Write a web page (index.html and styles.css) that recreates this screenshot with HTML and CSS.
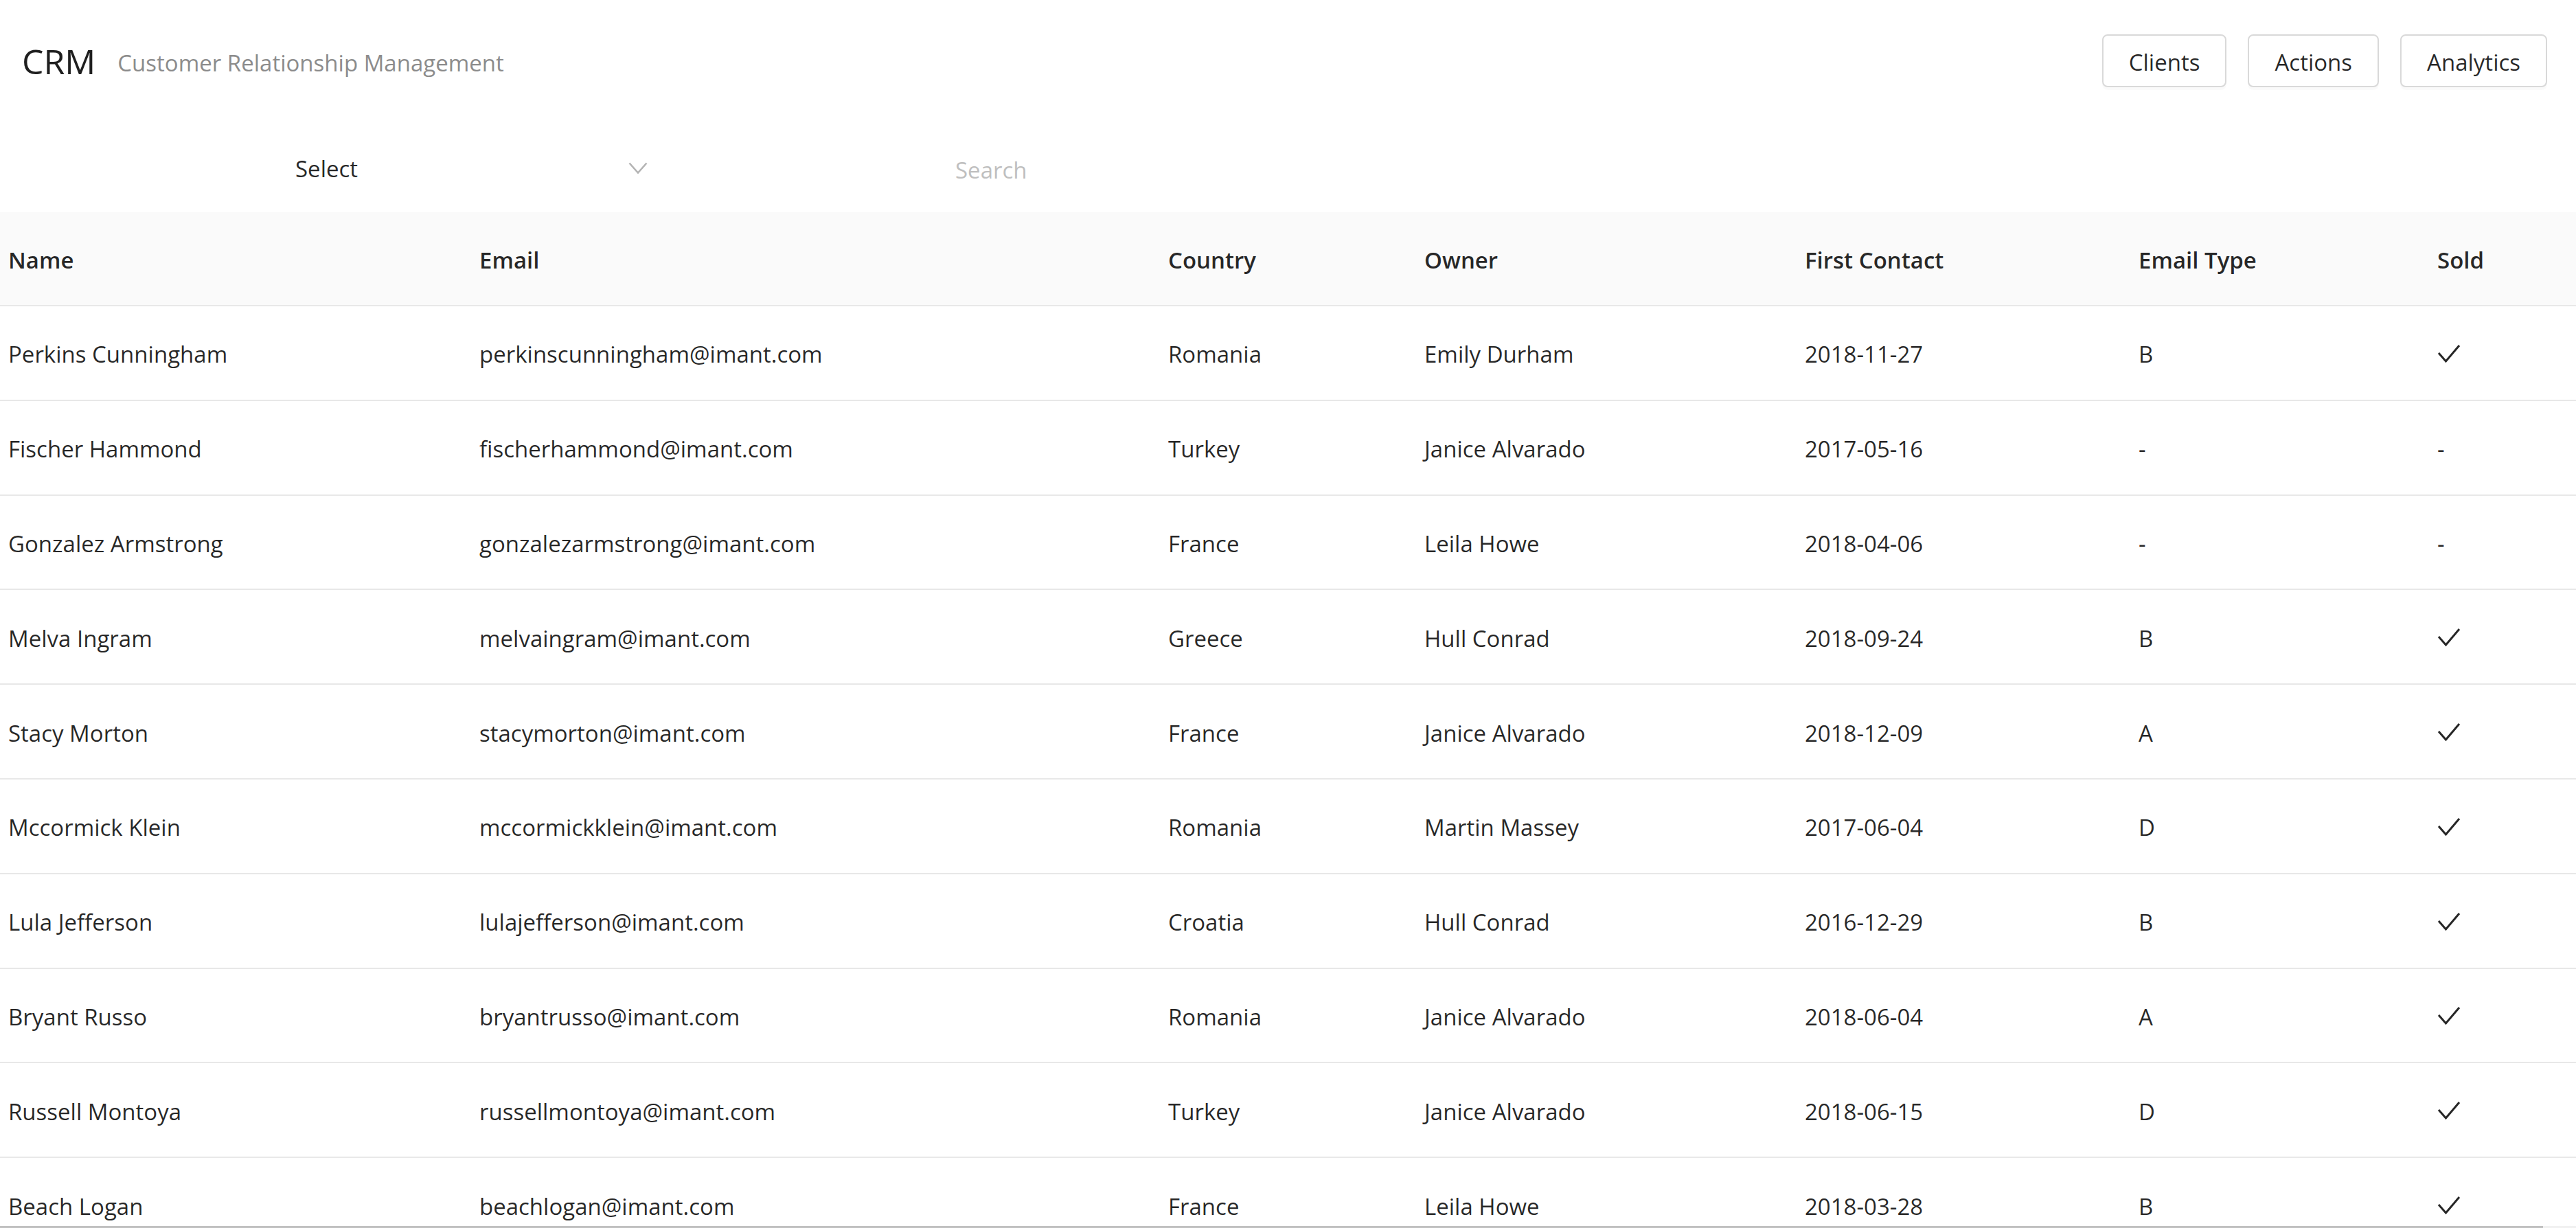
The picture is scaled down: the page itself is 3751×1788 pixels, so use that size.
FILE: index.html
```html
<!DOCTYPE html>
<html lang="en">
<head>
<meta charset="utf-8">
<title>CRM</title>
<link rel="stylesheet" href="styles.css">
</head>
<body>
<header class="topbar">
  <div class="brand">
    <span class="brand-title">CRM</span>
    <span class="brand-sub">Customer Relationship Management</span>
  </div>
  <nav class="nav">
    <button class="btn">Clients</button>
    <button class="btn">Actions</button>
    <button class="btn">Analytics</button>
  </nav>
</header>

<section class="filters">
  <div class="select">
    <span class="select-value">Select</span>
    <svg class="select-arrow" width="28" height="18" viewBox="0 0 28 18"><polyline points="1.5,1.5 14,15.5 26.5,1.5" fill="none" stroke="#b4b4b4" stroke-width="2.6"/></svg>
  </div>
  <div class="search"><span class="placeholder">Search</span></div>
</section>

<div class="table-wrap">
  <table class="grid">
    <colgroup>
      <col class="c-name"><col class="c-email"><col class="c-country"><col class="c-owner"><col class="c-date"><col class="c-type"><col class="c-sold">
    </colgroup>
    <thead>
      <tr><th>Name</th><th>Email</th><th>Country</th><th>Owner</th><th>First Contact</th><th>Email Type</th><th>Sold</th></tr>
    </thead>
    <tbody>
      <tr><td>Perkins Cunningham</td><td>perkinscunningham@imant.com</td><td>Romania</td><td>Emily Durham</td><td>2018-11-27</td><td>B</td><td><svg class="check" width="34" height="28" viewBox="0 0 34 28"><polyline points="2,13 12.5,25 32,2" fill="none" stroke="#262626" stroke-width="3"/></svg></td></tr>
      <tr><td>Fischer Hammond</td><td>fischerhammond@imant.com</td><td>Turkey</td><td>Janice Alvarado</td><td>2017-05-16</td><td>-</td><td>-</td></tr>
      <tr><td>Gonzalez Armstrong</td><td>gonzalezarmstrong@imant.com</td><td>France</td><td>Leila Howe</td><td>2018-04-06</td><td>-</td><td>-</td></tr>
      <tr><td>Melva Ingram</td><td>melvaingram@imant.com</td><td>Greece</td><td>Hull Conrad</td><td>2018-09-24</td><td>B</td><td><svg class="check" width="34" height="28" viewBox="0 0 34 28"><polyline points="2,13 12.5,25 32,2" fill="none" stroke="#262626" stroke-width="3"/></svg></td></tr>
      <tr><td>Stacy Morton</td><td>stacymorton@imant.com</td><td>France</td><td>Janice Alvarado</td><td>2018-12-09</td><td>A</td><td><svg class="check" width="34" height="28" viewBox="0 0 34 28"><polyline points="2,13 12.5,25 32,2" fill="none" stroke="#262626" stroke-width="3"/></svg></td></tr>
      <tr><td>Mccormick Klein</td><td>mccormickklein@imant.com</td><td>Romania</td><td>Martin Massey</td><td>2017-06-04</td><td>D</td><td><svg class="check" width="34" height="28" viewBox="0 0 34 28"><polyline points="2,13 12.5,25 32,2" fill="none" stroke="#262626" stroke-width="3"/></svg></td></tr>
      <tr><td>Lula Jefferson</td><td>lulajefferson@imant.com</td><td>Croatia</td><td>Hull Conrad</td><td>2016-12-29</td><td>B</td><td><svg class="check" width="34" height="28" viewBox="0 0 34 28"><polyline points="2,13 12.5,25 32,2" fill="none" stroke="#262626" stroke-width="3"/></svg></td></tr>
      <tr><td>Bryant Russo</td><td>bryantrusso@imant.com</td><td>Romania</td><td>Janice Alvarado</td><td>2018-06-04</td><td>A</td><td><svg class="check" width="34" height="28" viewBox="0 0 34 28"><polyline points="2,13 12.5,25 32,2" fill="none" stroke="#262626" stroke-width="3"/></svg></td></tr>
      <tr><td>Russell Montoya</td><td>russellmontoya@imant.com</td><td>Turkey</td><td>Janice Alvarado</td><td>2018-06-15</td><td>D</td><td><svg class="check" width="34" height="28" viewBox="0 0 34 28"><polyline points="2,13 12.5,25 32,2" fill="none" stroke="#262626" stroke-width="3"/></svg></td></tr>
      <tr><td>Beach Logan</td><td>beachlogan@imant.com</td><td>France</td><td>Leila Howe</td><td>2018-03-28</td><td>B</td><td><svg class="check" width="34" height="28" viewBox="0 0 34 28"><polyline points="2,13 12.5,25 32,2" fill="none" stroke="#262626" stroke-width="3"/></svg></td></tr>
    </tbody>
  </table>
</div>
<div class="hscroll"><div class="hscroll-thumb"></div></div>
</body>
</html>
```
FILE: styles.css
```css
html, body {
  margin: 0;
  padding: 0;
  overflow: hidden;
  background: #ffffff;
}
body {
  font-family: "Open Sans", "Noto Sans", sans-serif;
  font-size: 33px;
  color: rgba(0, 0, 0, 0.85);
}

/* top bar */
.topbar {
  display: flex;
  align-items: center;
  justify-content: space-between;
  padding: 50px 42px 0 32px;
  height: 77px;
}
.brand {
  display: flex;
  align-items: center;
}
.brand-title {
  font-size: 50px;
  color: #1f1f1f;
  line-height: 66px;
}
.brand-sub {
  margin-left: 32px;
  margin-top: 5px;
  font-size: 33px;
  color: #8c8c8c;
}
.nav {
  display: flex;
  gap: 31px;
}
.btn {
  font-family: inherit;
  font-size: 33px;
  color: rgba(0, 0, 0, 0.85);
  background: #fff;
  height: 77px;
  padding: 4px 37px 0;
  border: 2px solid #d9d9d9;
  border-radius: 8px;
  box-shadow: 0 4px 0 rgba(0, 0, 0, 0.02);
  line-height: 1;
}

/* filter row */
.filters {
  display: flex;
  align-items: center;
  padding: 80px 0 0 402px;
  height: 77px;
  margin-bottom: 25px;
  gap: 398px;
}
.select {
  width: 566px;
  box-sizing: border-box;
  height: 77px;
  display: flex;
  align-items: center;
  justify-content: space-between;
  padding: 0 25px 0 28px;
}
.select-value {
  color: rgba(0, 0, 0, 0.85);
}
.select-arrow {
  display: block;
  margin-top: -2px;
}
.search {
  width: 700px;
  height: 77px;
  display: flex;
  align-items: center;
  padding: 3px 0 0 25px;
  box-sizing: border-box;
}
.placeholder {
  color: #bfbfbf;
}

/* table */
.table-wrap {
  height: 1476px;
  overflow: hidden;
}
.grid {
  width: 3751px;
  table-layout: fixed;
  border-collapse: separate;
  border-spacing: 0;
}
.c-name { width: 686px; }
.c-email { width: 1003px; }
.c-country { width: 373px; }
.c-owner { width: 554px; }
.c-date { width: 486px; }
.c-type { width: 435px; }
.c-sold { width: 214px; }

.grid th {
  background: #fafafa;
  font-weight: 600;
  text-align: left;
  color: rgba(0, 0, 0, 0.85);
  height: 137px;
  box-sizing: border-box;
  padding: 3px 12px 0;
  border-bottom: 2px solid #e8e8e8;
  vertical-align: middle;
  white-space: nowrap;
}
.grid td {
  height: 137.8px;
  box-sizing: border-box;
  padding: 4px 12px 0;
  border-bottom: 2px solid #e8e8e8;
  vertical-align: middle;
  white-space: nowrap;
  color: rgba(0, 0, 0, 0.85);
}
.check {
  display: block;
  margin-top: -2px;
}

/* horizontal scrollbar peeking at the bottom */
.hscroll {
  height: 30px;
  background: #f1f1f1;
  display: flex;
}
.hscroll-thumb {
  width: 3703px;
  background: #c1c1c1;
}
```
